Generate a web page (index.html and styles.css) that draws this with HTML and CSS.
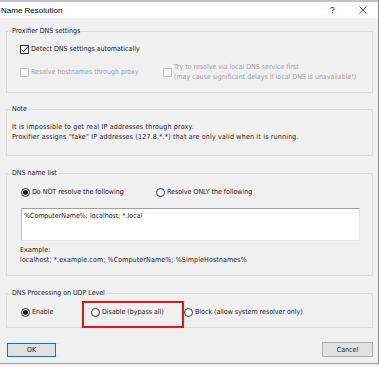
FILE: index.html
```html
<!DOCTYPE html>
<html>
<head>
<meta charset="utf-8">
<link rel="stylesheet" href="styles.css">
</head>
<body>
<div class="window">
  <div class="titlebar">
    <span class="title">Name Resolution</span>
    <span class="help">?</span>
    <svg class="close" width="8" height="8" viewBox="0 0 8 8"><path d="M0.5 0.5 L7.5 7.5 M7.5 0.5 L0.5 7.5" stroke="#222" stroke-width="0.8" fill="none"/></svg>
  </div>
  <div class="content">
    <fieldset class="group g1">
      <legend>Proxifier DNS settings</legend>
      <div class="inner in1">
        <div class="row">
          <span class="box checked"><svg width="9" height="9" viewBox="0 0 9 9"><path d="M1.6 4.6 L3.6 6.6 L7.6 2" stroke="#222" stroke-width="1" fill="none"/></svg></span>
          <span>Detect DNS settings automatically</span>
        </div>
        <div class="grid2">
          <div class="row disabled">
            <span class="box"></span>
            <span>Resolve hostnames through proxy</span>
          </div>
          <div class="row disabled">
            <span class="box"></span>
            <span class="two">Try to resolve via local DNS service first<br>(may cause significant delays if local DNS is unavailable!)</span>
          </div>
        </div>
      </div>
    </fieldset>

    <fieldset class="group g2">
      <legend>Note</legend>
      <div class="inner in2">
        <p>It is impossible to get real IP addresses through proxy.<br>Proxifier assigns "fake" IP addresses (127.8.*.*) that are only valid when it is running.</p>
      </div>
    </fieldset>

    <fieldset class="group g3">
      <legend>DNS name list</legend>
      <div class="inner in3">
        <div class="radios r3">
          <div class="row"><span class="radio on"></span><span>Do NOT resolve the following</span></div>
          <div class="row"><span class="radio"></span><span>Resolve ONLY the following</span></div>
        </div>
        <div class="textarea">%ComputerName%; localhost; *.local</div>
        <p class="example">Example:<br>localhost; *.example.com; %ComputerName%; %SimpleHostnames%</p>
      </div>
    </fieldset>

    <fieldset class="group g4">
      <legend>DNS Processing on UDP Level</legend>
      <div class="inner in4">
        <div class="radios r4">
          <div class="row"><span class="radio on"></span><span>Enable</span></div>
          <div class="row"><span class="radio"></span><span>Disable (bypass all)</span></div>
          <div class="row"><span class="radio"></span><span>Block (allow system resolver only)</span></div>
        </div>
      </div>
      <div class="highlight"></div>
    </fieldset>

    <div class="buttons">
      <div class="btn ok">OK</div>
      <div class="btn cancel">Cancel</div>
    </div>
  </div>
</div>
</body>
</html>
```

FILE: styles.css
```css
* { box-sizing: border-box; }
html, body { margin: 0; padding: 0; }
body {
  background: #f4f2f2;
  font-family: "DejaVu Sans Condensed", "DejaVu Sans", sans-serif;
  font-size: 7px;
  color: #1a1a1a;
  width: 379px;
  height: 367px;
  overflow: hidden;
}
.window {
  width: 379px;
  height: 364px;
  background: #f0f0f0;
  border-right: 1px solid #8e8e8e;
  border-bottom: 1px solid #a89a9c;
  display: flex;
  flex-direction: column;
}
.titlebar {
  height: 18px;
  border-top: 2px solid #c4c4c4;
  background: #fff;
  display: flex;
  align-items: center;
  font-family: "Liberation Sans", Arial, sans-serif;
  font-size: 8px;
  color: #000;
}
.title { padding-left: 1px; flex: 1; }
.help { width: 6px; margin-right: 23px; font-size: 8.5px; color: #222; }
.close { margin-right: 11px; }

.content {
  padding: 0 5px 0 6px;
  display: flex;
  flex-direction: column;
  position: relative;
}
.group {
  margin: 0;
  padding: 0;
  border: 1px solid #dcdcdc;
  min-inline-size: 0;
  position: relative;
}
.group legend {
  padding: 0 1px;
  margin-left: 4px;
  line-height: 9px;
}
.inner { padding-left: 13px; }
.g1 { margin-top: 9px; }
.in1 { padding-top: 8px; padding-bottom: 10px; }
.row { display: flex; align-items: center; line-height: 10px; white-space: nowrap; }
.in1 > .row { height: 10px; }
.grid2 {
  display: grid;
  grid-template-columns: 143px auto;
  margin-top: 8px;
  height: 20px;
  align-items: center;
}
.box {
  width: 9px; height: 9px;
  border: 1px solid #333;
  background: #fff;
  margin-right: 2px;
  flex: none;
  display: flex;
}
.box svg { margin: -1px; }
.disabled { color: #a0a0a0; }
.disabled .box { border-color: #c4c4c4; background: #fbfbfb; }
.two { line-height: 10px; }

.g2 { margin-top: 12px; }
.in2 { padding: 8px 0 13px 5px; }
.in2 p { margin: 0; line-height: 10px; letter-spacing: 0.2px; }

.g3 { margin-top: 13px; }
.in3 { padding: 9px 0 10px 14px; }
.radios { display: grid; height: 10px; align-items: center; }
.r3 { grid-template-columns: 135px auto; }
.radio {
  width: 9px; height: 9px;
  border: 1px solid #333;
  border-radius: 50%;
  background: #fff;
  margin-right: 2px;
  flex: none;
  display: flex;
  align-items: center;
  justify-content: center;
}
.radio.on::after {
  content: "";
  width: 5px; height: 5px;
  border-radius: 50%;
  background: #222;
}
.textarea {
  margin-top: 11px;
  width: 339px;
  height: 33px;
  background: #fff;
  border: 1px solid #e3e3e3;
  border-top-color: #a0a0a0;
  border-left-color: #b8b8b8;
  padding: 2px 2px;
  line-height: 10px;
}
.example { margin: 5px 0 0 -1px; line-height: 9.5px; letter-spacing: 0.13px; }

.g4 { margin-top: 13px; }
.in4 { padding: 9px 0 10px 14px; }
.r4 { grid-template-columns: 70px 93px auto; }
.highlight {
  position: absolute;
  left: 75px;
  top: 3px;
  width: 102px;
  height: 27px;
  border: 2px solid #ee1111;
}

.buttons {
  display: flex;
  justify-content: space-between;
  align-items: flex-end;
  margin-top: 14px;
  padding-left: 1px;
}
.btn {
  height: 14px;
  background: #e1e1e1;
  border: 1px solid #adadad;
  display: flex;
  align-items: center;
  justify-content: center;
}
.ok { width: 49px; border-color: #0078d7; }
.cancel { width: 51px; height: 15px; }
```
